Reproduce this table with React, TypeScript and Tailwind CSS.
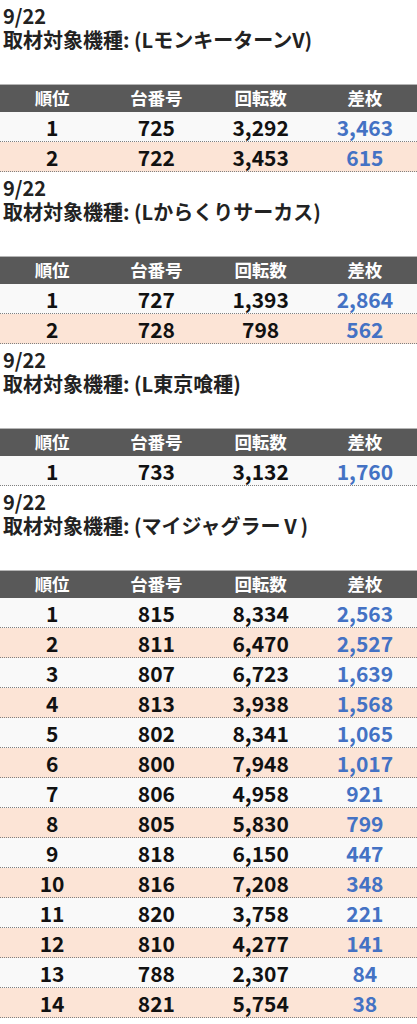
type Row = [number, number, string, string];

interface Section {
  machine: string;
  rows: Row[];
}

const sections: Section[] = [
  {
    machine: "(LモンキーターンV)",
    rows: [
      [1, 725, "3,292", "3,463"],
      [2, 722, "3,453", "615"],
    ],
  },
  {
    machine: "(Lからくりサーカス)",
    rows: [
      [1, 727, "1,393", "2,864"],
      [2, 728, "798", "562"],
    ],
  },
  {
    machine: "(L東京喰種)",
    rows: [[1, 733, "3,132", "1,760"]],
  },
  {
    machine: "(マイジャグラー\u2164)",
    rows: [
      [1, 815, "8,334", "2,563"],
      [2, 811, "6,470", "2,527"],
      [3, 807, "6,723", "1,639"],
      [4, 813, "3,938", "1,568"],
      [5, 802, "8,341", "1,065"],
      [6, 800, "7,948", "1,017"],
      [7, 806, "4,958", "921"],
      [8, 805, "5,830", "799"],
      [9, 818, "6,150", "447"],
      [10, 816, "7,208", "348"],
      [11, 820, "3,758", "221"],
      [12, 810, "4,277", "141"],
      [13, 788, "2,307", "84"],
      [14, 821, "5,754", "38"],
    ],
  },
];

const headers = ["順位", "台番号", "回転数", "差枚"];

function ResultTable({ section }: { section: Section }) {
  return (
    <div className="mt-[4px]">
      {/* Title */}
      <div className="pl-[3px] text-[20px] leading-[24px] font-bold text-[#222]">
        <div>9/22</div>
        <div>取材対象機種: {section.machine}</div>
      </div>

      {/* Table */}
      <div className="mt-[32px]">
        <div className="grid grid-cols-4 h-[28px] items-center bg-[#595959] border-t border-[#b5b5b5] text-[17.5px] font-bold text-white">
          {headers.map((h) => (
            <div key={h} className="text-center">
              {h}
            </div>
          ))}
        </div>
        {section.rows.map((r, i) => (
          <div
            key={r[0]}
            className={`grid grid-cols-4 h-[30px] items-center border-b border-dotted border-[#808080] text-[21px] font-bold ${
              i % 2 === 0 ? "bg-[#f9f9f9]" : "bg-[#fce4d6]"
            }`}
          >
            <div className="text-center text-[#111]">{r[0]}</div>
            <div className="text-center text-[#111]">{r[1]}</div>
            <div className="text-center text-[#111]">{r[2]}</div>
            <div className="text-center text-[#4472c4]">{r[3]}</div>
          </div>
        ))}
      </div>
    </div>
  );
}

export default function App() {
  return (
    <div
      className="w-[417px] bg-white"
      style={{ fontFamily: '"Noto Sans CJK JP", "Noto Sans", sans-serif' }}
    >
      {sections.map((s) => (
        <ResultTable key={s.machine} section={s} />
      ))}
    </div>
  );
}
